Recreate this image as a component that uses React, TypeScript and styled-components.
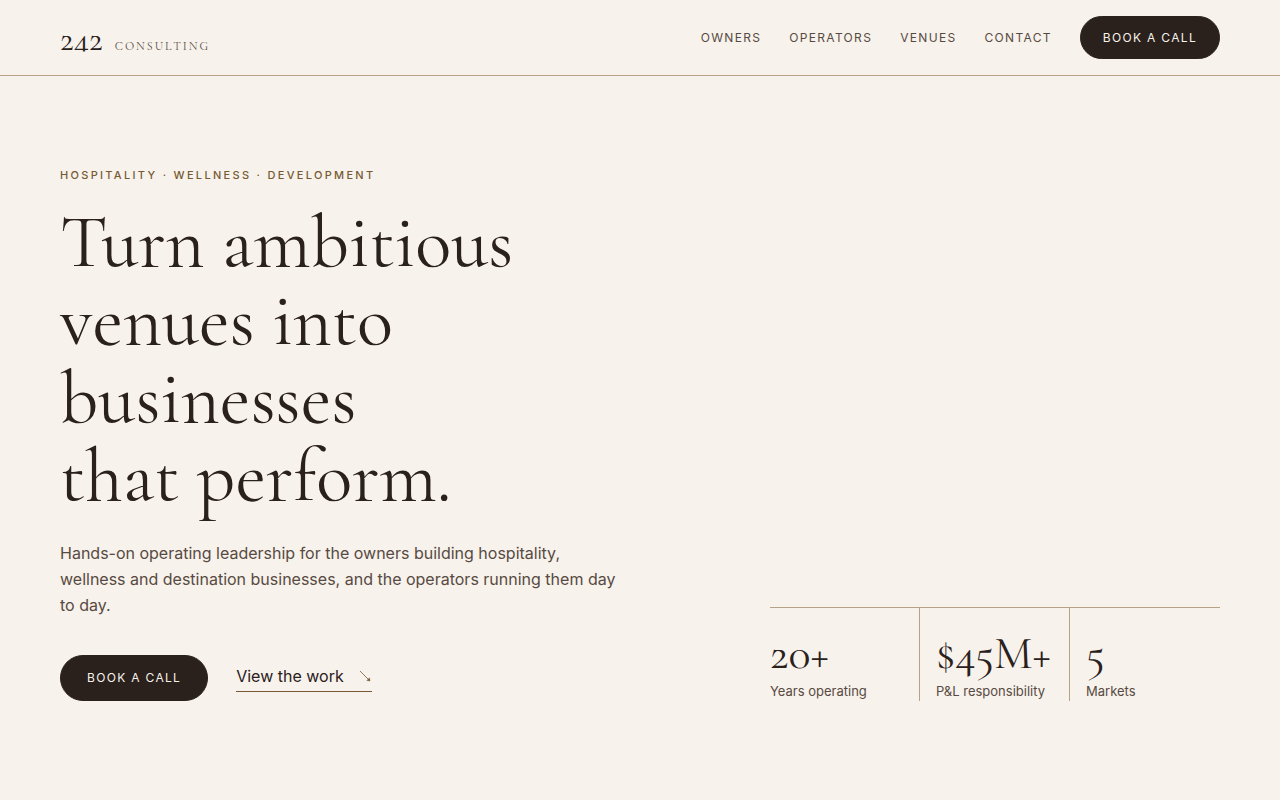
import React from 'react';
import styled, { createGlobalStyle } from 'styled-components';

const ink = '#2a201c';
const muted = '#574a43';
const cream = '#f7f2eb';
const line = '#b5a287';
const bronze = '#765a34';
const serif = '"Cormorant Garamond", "Liberation Serif", serif';

const GlobalStyle = createGlobalStyle`
  *, *::before, *::after { box-sizing: border-box; }
  body {
    margin: 0;
    background: ${cream};
    color: ${ink};
    font-family: Inter, "Liberation Sans", sans-serif;
    font-size: 16px;
  }
  a { color: inherit; text-decoration: none; }
`;

const Header = styled.header`
  display: flex;
  align-items: center;
  justify-content: space-between;
  padding: 16px 60px;
  border-bottom: 1px solid ${line};
`;

const Brand = styled.a`
  display: flex;
  align-items: baseline;
  gap: 12px;
  padding-top: 4px;
  font-family: ${serif};
`;

/* The numerals are trimmed at the baseline so that the 4 stands level with the 2s. */
const BrandMark = styled.span`
  font-size: 34px;
  line-height: 32px;
  clip-path: inset(0 0 4px 0);
`;

const BrandName = styled.span`
  font-size: 12px;
  letter-spacing: 2px;
  text-transform: uppercase;
  color: ${muted};
`;

const Nav = styled.nav`
  display: flex;
  align-items: center;
  gap: 28px;
`;

const NavLink = styled.a`
  font-size: 12px;
  line-height: 19px;
  letter-spacing: 0.11em;
  text-transform: uppercase;
  color: ${muted};
`;

const PillButton = styled.button<{ $large?: boolean }>`
  padding: ${({ $large }) => ($large ? '13px 26px' : '11px 22px')};
  border: 1px solid ${ink};
  border-radius: 999px;
  background: ${ink};
  color: ${cream};
  font-family: inherit;
  font-size: 12px;
  line-height: ${({ $large }) => ($large ? '18px' : '19px')};
  letter-spacing: 0.11em;
  text-transform: uppercase;
  cursor: pointer;
`;

const Hero = styled.main`
  display: grid;
  grid-template-columns: minmax(0, 1fr) 450px;
  align-items: end;
  gap: 80px;
  padding: 90px 60px 99px;
`;

const Eyebrow = styled.p`
  margin: 0 0 20px;
  font-size: 11px;
  line-height: 18px;
  font-weight: 500;
  letter-spacing: 0.21em;
  text-transform: uppercase;
  color: ${bronze};
`;

const Headline = styled.h1`
  margin: 0 0 24px;
  font-family: ${serif};
  font-size: 75px;
  font-weight: 400;
  line-height: 78px;
`;

const Lead = styled.p`
  max-width: 560px;
  margin: 0 0 37px;
  line-height: 26px;
  color: ${muted};
`;

const Actions = styled.div`
  display: flex;
  align-items: center;
  gap: 28px;
`;

const TextLink = styled.a`
  display: inline-flex;
  align-items: center;
  gap: 14px;
  padding-bottom: 3px;
  border-bottom: 1px solid ${bronze};
  line-height: 24px;
`;

const Stats = styled.dl`
  display: grid;
  grid-template-columns: repeat(3, 1fr);
  margin: 0;
  border-top: 1px solid ${line};
`;

const Stat = styled.div`
  display: flex;
  flex-direction: column-reverse;
  gap: 4px;
  padding: 20px 0 0 16px;
  border-right: 1px solid ${line};

  &:first-child { padding-left: 0; }
  &:last-child { border-right: 0; }
`;

const StatValue = styled.dd`
  margin: 0;
  font-family: ${serif};
  font-size: 46px;
  line-height: 50px;
`;

const StatLabel = styled.dt`
  font-size: 13px;
  line-height: 19px;
  white-space: nowrap;
  color: ${muted};
`;

const links = ['Owners', 'Operators', 'Venues', 'Contact'];

const stats = [
  { value: '20+', label: 'Years operating' },
  { value: '$45M+', label: 'P&L responsibility' },
  { value: '5', label: 'Markets' },
];

const ArrowIcon = () => (
  <svg width="14" height="14" viewBox="0 0 14 14" fill="none" stroke={bronze} aria-hidden="true">
    <path d="M2 2L11.5 11.5" strokeWidth="0.8" />
    <path d="M12 12L11.5 8.8L8.8 11.5Z" strokeWidth="0.4" fill={bronze} />
  </svg>
);

export default function App() {
  return (
    <>
      <GlobalStyle />
      <Header>
        <Brand href="#">
          <BrandMark>242</BrandMark>
          <BrandName>Consulting</BrandName>
        </Brand>
        <Nav>
          {links.map((name) => (
            <NavLink key={name} href={`#${name.toLowerCase()}`}>{name}</NavLink>
          ))}
          <PillButton type="button">Book a call</PillButton>
        </Nav>
      </Header>
      <Hero>
        <section>
          <Eyebrow>Hospitality · Wellness · Development</Eyebrow>
          <Headline>
            Turn ambitious venues into businesses<br />that perform.
          </Headline>
          <Lead>
            Hands-on operating leadership for the owners building hospitality, wellness and
            destination businesses, and the operators running them day to day.
          </Lead>
          <Actions>
            <PillButton type="button" $large>Book a call</PillButton>
            <TextLink href="#work">
              View the work
              <ArrowIcon />
            </TextLink>
          </Actions>
        </section>
        <Stats>
          {stats.map(({ value, label }) => (
            <Stat key={label}>
              <StatLabel>{label}</StatLabel>
              <StatValue>{value}</StatValue>
            </Stat>
          ))}
        </Stats>
      </Hero>
    </>
  );
}
